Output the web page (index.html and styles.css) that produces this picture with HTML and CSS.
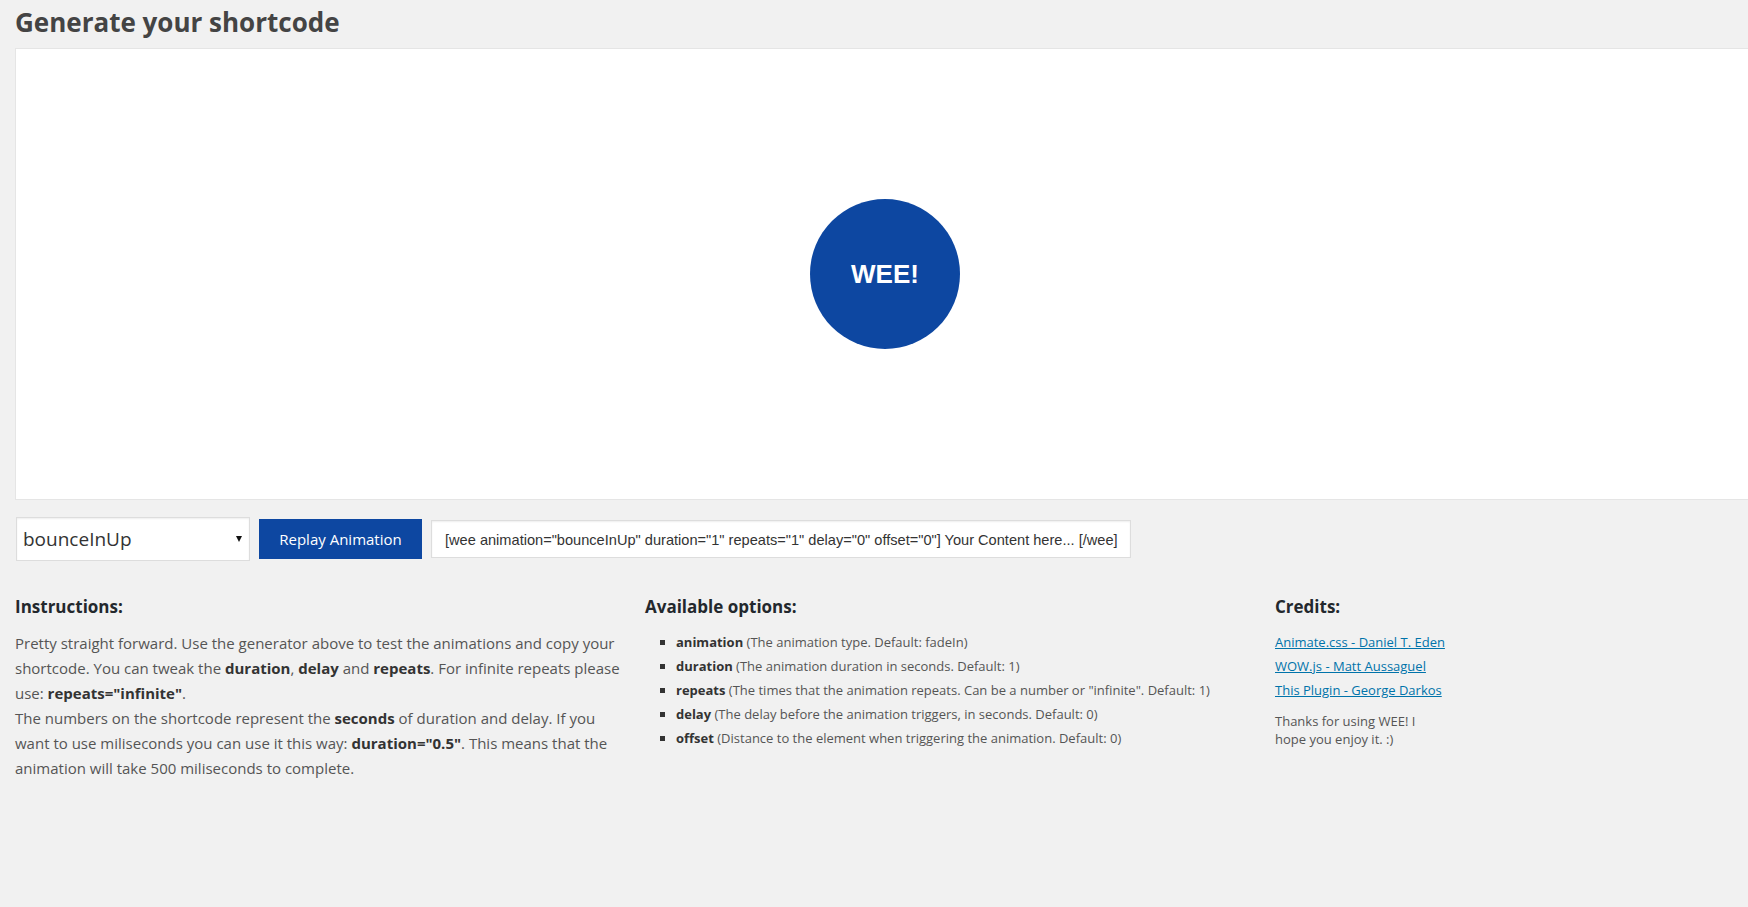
FILE: index.html
```html
<!DOCTYPE html>
<html>
<head>
<meta charset="utf-8">
<link rel="stylesheet" href="styles.css">
</head>
<body>
<div class="wrap">
  <h2 class="title">Generate your shortcode</h2>
  <div class="stage">
    <div class="wee">WEE!</div>
  </div>
  <div class="controls">
    <div class="select-wrap">
      <select class="anim-select">
        <option>bounceInUp</option>
      </select>
    </div>
    <button class="replay">Replay Animation</button>
    <input class="shortcode" type="text" value='[wee animation="bounceInUp" duration="1" repeats="1" delay="0" offset="0"] Your Content here... [/wee]'>
  </div>
  <div class="info">
    <div class="col">
      <h3>Instructions:</h3>
      <p class="instr">Pretty straight forward. Use the generator above to test the animations and copy your shortcode. You can tweak the <b>duration</b>, <b>delay</b> and <b>repeats</b>. For infinite repeats please use: <b>repeats="infinite"</b>.<br>The numbers on the shortcode represent the <b>seconds</b> of duration and delay. If you want to use miliseconds you can use it this way: <b>duration="0.5"</b>. This means that the animation will take 500 miliseconds to complete.</p>
    </div>
    <div class="col">
      <h3>Available options:</h3>
      <ul class="opts">
        <li><b>animation</b> (The animation type. Default: fadeIn)</li>
        <li><b>duration</b> (The animation duration in seconds. Default: 1)</li>
        <li><b>repeats</b> (The times that the animation repeats. Can be a number or "infinite". Default: 1)</li>
        <li><b>delay</b> (The delay before the animation triggers, in seconds. Default: 0)</li>
        <li><b>offset</b> (Distance to the element when triggering the animation. Default: 0)</li>
      </ul>
    </div>
    <div class="col">
      <h3>Credits:</h3>
      <ul class="credits">
        <li><a href="#">Animate.css - Daniel T. Eden</a></li>
        <li><a href="#">WOW.js - Matt Aussaguel</a></li>
        <li><a href="#">This Plugin - George Darkos</a></li>
      </ul>
      <p class="thanks">Thanks for using WEE! I hope you enjoy it. :)</p>
    </div>
  </div>
</div>
</body>
</html>
```
FILE: styles.css
```css
html, body {
  margin: 0;
  padding: 0;
  overflow: hidden;
}
body {
  background: #f1f1f1;
  font-family: "Open Sans", sans-serif;
  font-size: 13px;
  color: #444;
}
.wrap {
  padding: 0 15px;
}
.title {
  margin: 0;
  padding: 7px 0 0;
  font-size: 26px;
  line-height: 30px;
  font-weight: 700;
  color: #444;
}
.stage {
  margin-top: 11px;
  width: 1738px;
  height: 450px;
  background: #fff;
  border: 1px solid #e5e5e5;
  display: flex;
  align-items: center;
  justify-content: center;
}
.wee {
  width: 150px;
  height: 150px;
  border-radius: 50%;
  background: #0d47a1;
  color: #fff;
  font-family: "Liberation Sans", Arial, sans-serif;
  font-weight: bold;
  font-size: 26px;
  display: flex;
  align-items: center;
  justify-content: center;
}
.controls {
  margin-top: 17px;
  display: flex;
  align-items: center;
  gap: 9px;
}
.select-wrap {
  position: relative;
  margin-left: 1px;
}
.select-wrap::after {
  content: "";
  position: absolute;
  right: 8px;
  top: 19px;
  border-left: 3px solid transparent;
  border-right: 3px solid transparent;
  border-top: 6px solid #111;
}
.anim-select {
  appearance: none;
  -webkit-appearance: none;
  width: 234px;
  height: 44px;
  box-sizing: border-box;
  border: 1px solid #ddd;
  box-shadow: inset 0 1px 2px rgba(0,0,0,0.07);
  background: #fff;
  font-family: "Open Sans", sans-serif;
  font-size: 19px;
  color: #333;
  padding: 0 6px;
  border-radius: 0;
}
.replay {
  width: 163px;
  height: 40px;
  border: 0;
  background: #0d47a1;
  color: #fff;
  font-family: "Open Sans", sans-serif;
  font-size: 15px;
  padding: 0;
}
.shortcode {
  width: 700px;
  height: 38px;
  box-sizing: border-box;
  border: 1px solid #ddd;
  box-shadow: inset 0 1px 2px rgba(0,0,0,0.07);
  background: #fff;
  font-family: "Liberation Sans", Arial, sans-serif;
  font-size: 14.6px;
  color: #333;
  padding: 1px 8px 0 13px;
}
.info {
  margin-top: 34px;
  display: grid;
  grid-template-columns: 630px 630px 630px;
}
.col h3 {
  margin: 0;
  font-size: 17px;
  line-height: 24px;
  font-weight: 700;
  color: #23282d;
}
.instr {
  margin: 12px 0 0;
  width: 610px;
  font-size: 15px;
  line-height: 25px;
  color: #555;
}
.instr b, .opts b {
  color: #333;
}
.opts {
  margin: 14px 0 0;
  padding: 0 0 0 31px;
  list-style: square;
  color: #555;
}
.opts li, .credits li {
  line-height: 18px;
  margin-bottom: 6px;
}
.opts li::marker {
  color: #333;
}
.credits {
  margin: 14px 0 0;
  padding: 0;
  list-style: none;
}
.credits a {
  color: #0073aa;
  text-decoration: underline;
}
.thanks {
  margin: 13px 0 0;
  width: 160px;
  line-height: 18px;
  color: #555;
}
```
